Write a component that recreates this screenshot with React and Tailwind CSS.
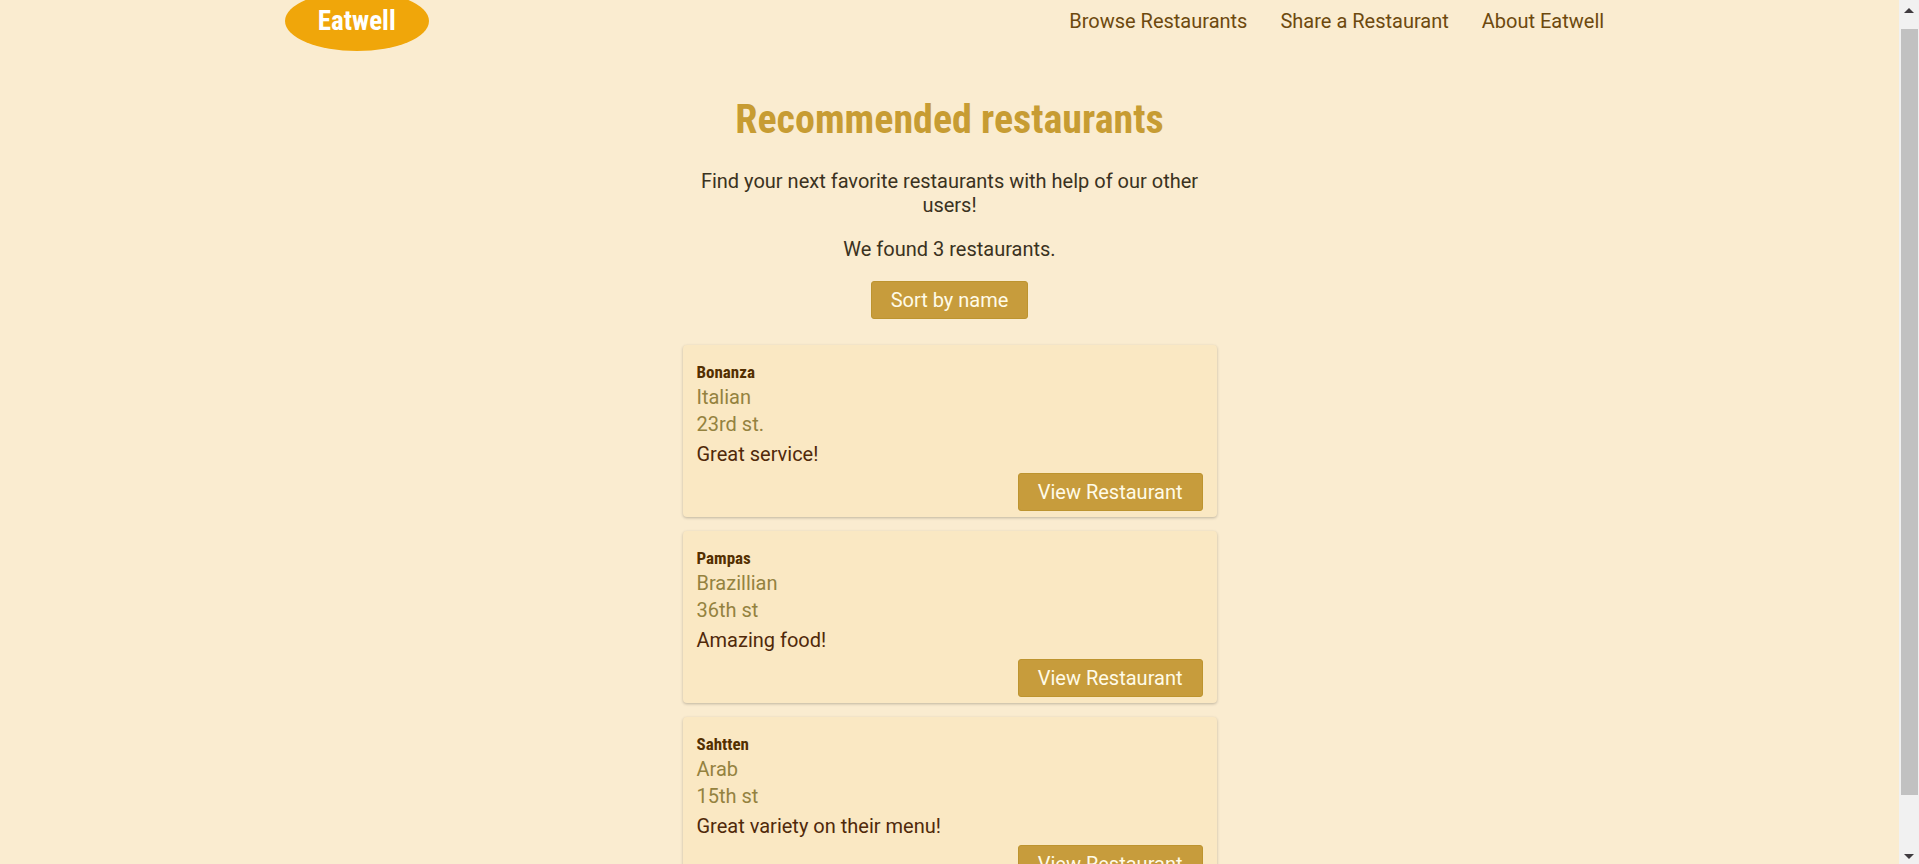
const restaurants = [
  { name: 'Bonanza', cuisine: 'Italian', address: '23rd st.', note: 'Great service!' },
  { name: 'Pampas', cuisine: 'Brazillian', address: '36th st', note: 'Amazing food!' },
  { name: 'Sahtten', cuisine: 'Arab', address: '15th st', note: 'Great variety on their menu!' },
];

const links = ['Browse Restaurants', 'Share a Restaurant', 'About Eatwell'];

function Header() {
  return (
    <header className="-mt-[9px] flex items-center justify-between px-[15%]">
      <a
        href="#home"
        className="flex h-[60px] items-center rounded-[50%] bg-[#f0a60a] px-[33px] font-['Roboto_Condensed','Roboto',sans-serif] text-[27px] font-bold text-white"
      >
        Eatwell
      </a>
      <nav className="flex gap-[33px] pr-[10px] text-[#6d490e]">
        {links.map((link) => (
          <a key={link} href="#nav">
            {link}
          </a>
        ))}
      </nav>
    </header>
  );
}

function RestaurantCard({ name, cuisine, address, note }) {
  return (
    <li className="rounded-[4px] bg-[#fae8c3] px-[14px] pt-[17px] pb-[6px] shadow-[0_1px_3px_rgba(0,0,0,0.24)]">
      <h2 className="font-['Roboto_Condensed','Roboto',sans-serif] text-[17px] leading-[20px] font-bold text-[#532f00]">
        {name}
      </h2>
      <p className="mt-[3px] text-[#94823f]">{cuisine}</p>
      <p className="mt-[3px] text-[#94823f]">{address}</p>
      <p className="mt-[6px] text-[#50290a]">{note}</p>
      <div className="mt-[7px] flex justify-end">
        <a
          href="#restaurant"
          className="rounded-[3px] border border-[#bd942f] bg-[#c79c3c] px-[19px] py-[6px] text-[#fffbe8]"
        >
          View Restaurant
        </a>
      </div>
    </li>
  );
}

function Scrollbar() {
  return (
    <div aria-hidden="true" className="flex w-[20px] shrink-0 flex-col items-center bg-[#f1f1f1]">
      <svg className="h-[29px] w-[10px]" viewBox="0 0 10 29">
        <path d="M0 13L5 8L10 13Z" fill="#3f3b3f" />
      </svg>
      <div className="flex w-full grow flex-col pr-px pl-[2px]">
        <div className="basis-[95%] bg-[#c1c1c1]" />
      </div>
      <svg className="h-[29px] w-[10px]" viewBox="0 0 10 29">
        <path d="M0 19L5 24L10 19Z" fill="#3f3b3f" />
      </svg>
    </div>
  );
}

export default function App() {
  return (
    <div className="flex h-screen overflow-hidden bg-[#faecd0] font-['Roboto',sans-serif] text-[20px] leading-[24px] text-[#3a3221]">
      <div className="min-w-0 grow overflow-hidden">
        <Header />
        <main className="mx-auto mt-[45px] flex max-w-[534px] flex-col items-center text-center">
          <h1 className="font-['Roboto_Condensed','Roboto',sans-serif] text-[40px] leading-[48px] font-bold whitespace-nowrap text-[#c79c33]">
            Recommended restaurants
          </h1>
          <p className="mt-[25px]">Find your next favorite restaurants with help of our other users!</p>
          <p className="mt-[20px]">We found 3 restaurants.</p>
          <button
            type="button"
            className="mt-[20px] rounded-[3px] border border-[#bd942f] bg-[#c79c3c] px-[19px] py-[6px] text-[#fffbe8]"
          >
            Sort by name
          </button>
          <ul className="mt-[26px] flex w-full flex-col gap-[14px] text-left">
            {restaurants.map((restaurant) => (
              <RestaurantCard key={restaurant.name} {...restaurant} />
            ))}
          </ul>
        </main>
      </div>
      <Scrollbar />
    </div>
  );
}
